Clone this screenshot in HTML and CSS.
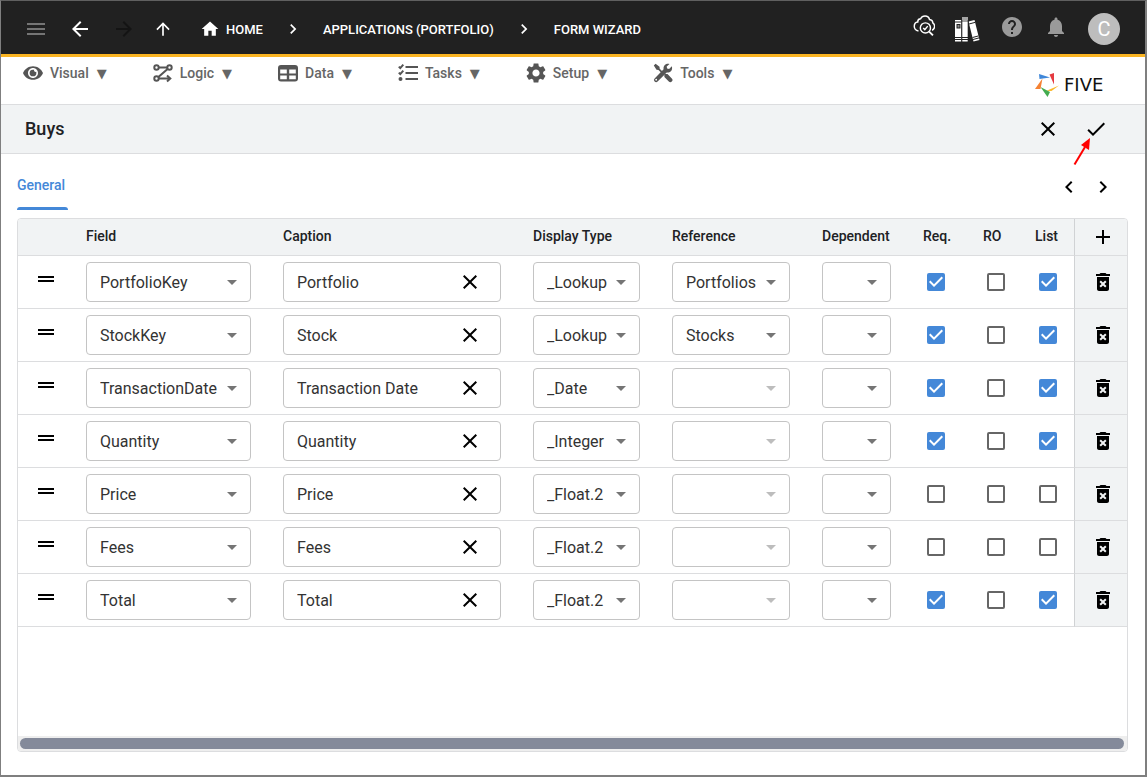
FILE: index.html
```html
<!DOCTYPE html>
<html lang="en">
<head>
    <meta charset="UTF-8">
    <meta name="viewport" content="width=device-width, initial-scale=1.0">
    <title>Form Wizard</title>
    <link rel="stylesheet" href="styles.css">
</head>
<body>

<!-- shared icons -->
<svg class="sprite" aria-hidden="true">
    <symbol id="i-drag" viewBox="0 0 24 24"><path d="M20 9H4v2h16V9zM4 15h16v-2H4v2z"/></symbol>
    <symbol id="i-close" viewBox="0 0 24 24"><path d="M19 6.41L17.59 5 12 10.59 6.41 5 5 6.41 10.59 12 5 17.59 6.41 19 12 13.41 17.59 19 19 17.59 13.41 12z"/></symbol>
    <symbol id="i-delete" viewBox="0 0 24 24"><path d="M6 19c0 1.1.9 2 2 2h8c1.1 0 2-.9 2-2V7H6v12zm2.46-7.12l1.41-1.41L12 12.59l2.12-2.12 1.41 1.41L13.41 14l2.12 2.12-1.41 1.41L12 15.41l-2.12 2.12-1.41-1.41L10.59 14l-2.13-2.12zM15.5 4l-1-1h-5l-1 1H5v2h14V4z"/></symbol>
    <symbol id="i-next" viewBox="0 0 24 24"><path d="M10 6L8.59 7.41 13.17 12l-4.58 4.59L10 18l6-6z"/></symbol>
    <symbol id="i-prev" viewBox="0 0 24 24"><path d="M15.41 7.41L14 6l-6 6 6 6 1.41-1.41L10.83 12z"/></symbol>
</svg>

<div class="window">
    <header class="topbar">
        <button class="icon-btn muted" aria-label="Menu"><svg class="icon" viewBox="0 0 24 24"><path d="M3 18h18v-2H3v2zm0-5h18v-2H3v2zm0-7v2h18V6H3z"/></svg></button>
        <button class="icon-btn" aria-label="Back"><svg class="icon" viewBox="0 0 24 24"><path d="M20 11H7.83l5.59-5.59L12 4l-8 8 8 8 1.41-1.41L7.83 13H20v-2z"/></svg></button>
        <button class="icon-btn off" aria-label="Forward" disabled><svg class="icon" viewBox="0 0 24 24"><path d="M12 4l-1.41 1.41L16.17 11H4v2h12.17l-5.58 5.59L12 20l8-8z"/></svg></button>
        <button class="icon-btn up" aria-label="Up"><svg class="icon small" viewBox="0 0 24 24"><path d="M4 12l1.41 1.41L11 7.83V20h2V7.83l5.58 5.59L20 12l-8-8-8 8z"/></svg></button>
        <nav class="crumbs">
            <a href="#"><svg class="icon small" viewBox="0 0 24 24"><path d="M10 20v-6h4v6h5v-8h3L12 3 2 12h3v8z"/></svg>HOME</a>
            <svg class="icon small"><use href="#i-next"/></svg>
            <a href="#">APPLICATIONS (PORTFOLIO)</a>
            <svg class="icon small"><use href="#i-next"/></svg>
            <a href="#">FORM WIZARD</a>
        </nav>
        <div class="tools">
            <button class="icon-btn" aria-label="Check status">
                <svg class="icon" viewBox="-2 1 25 25" fill="none" stroke="#fff">
                    <path stroke-width="1.5" d="M5.8 17.6C3.2 17.2 1.4 15.4 1.4 12.800c0-2.600 1.700-4.300 3.600-4.500C5 6.300 6.300 5 8 4.900 8.900 3 10.500 2 12.600 2c2.500 0 4.200 1.500 4.700 3.700 2.200.2 3.400 1.600 3.400 3.500 1.300.9 1.900 2 1.900 3.600 0 1.900-1 3.400-2.600 4.200"/>
                    <circle cx="13" cy="14.500" r="5.300" stroke-width="1.500"/>
                    <path stroke-width="1.500" d="M10.700 14.500l1.700 1.700 3-3.600"/>
                    <path stroke-width="2" d="M16.900 18.300l4 3.900"/>
                </svg>
            </button>
            <button class="icon-btn" aria-label="Library">
                <svg class="books" viewBox="0 -4 25 29">
                    <path fill="#fff" d="M0 3h6.500v21.500H0zM7 5h6v19.500H7z"/>
                    <path fill="#a5a5a5" d="M7 0h6v5H7z"/>
                    <path fill="#fff" d="M13.500 4.600l6-1.600 5 20-6 1.600z"/>
                    <path fill="none" stroke="#212121" stroke-width="1" d="M0 5h6.500M0 20.500h6.500M7 20.500h6M0 22.500h6.500M7 22.500h6M14 7l6-1.600M17.500 20.500l6-1.600M18 22.500l6-1.600M6.800 3v22M13.200 3v22"/>
                    <path fill="#212121" d="M1.500 7h4v4.500h-4z"/>
                    <path fill="#8a8a8a" d="M2.500 8h2v2.500h-2z"/>
                </svg>
            </button>
            <button class="icon-btn grey" aria-label="Help"><svg class="icon" viewBox="0 0 24 24"><path d="M12 2C6.480 2 2 6.480 2 12s4.480 10 10 10 10-4.480 10-10S17.520 2 12 2zm1 17h-2v-2h2v2zm2.070-7.750l-.9.920C13.450 12.900 13 13.500 13 15h-2v-.5c0-1.100.450-2.100 1.170-2.830l1.240-1.260c.370-.360.590-.860.590-1.410 0-1.100-.9-2-2-2s-2 .9-2 2H8c0-2.210 1.790-4 4-4s4 1.790 4 4c0 .880-.360 1.680-.930 2.250z"/></svg></button>
            <button class="icon-btn grey" aria-label="Notifications"><svg class="icon" viewBox="0 0 24 24"><path d="M12 22c1.100 0 2-.9 2-2h-4c0 1.100.890 2 2 2zm6-6v-5c0-3.070-1.640-5.640-4.500-6.320V4c0-.830-.670-1.500-1.500-1.500s-1.500.670-1.500 1.500v.680C7.630 5.360 6 7.920 6 11v5l-2 2v1h16v-1l-2-2z"/></svg></button>
        </div>
        <button class="avatar">C</button>
    </header>

    <div class="menubar">
        <nav class="menu">
            <button>
                <svg class="menu-icon" viewBox="1 1 22 22"><path d="M12 4.500C7 4.500 2.730 7.610 1 12c1.730 4.390 6 7.500 11 7.500s9.270-3.110 11-7.500c-1.730-4.390-6-7.500-11-7.500zM12 17.500c-3 0-5.500-2.500-5.500-5.500S9 6.500 12 6.500s5.500 2.500 5.500 5.500-2.500 5.500-5.500 5.500z"/><path d="M12 8.300a3.700 3.700 0 1 0 3.700 3.700c0-.5-.1-.9-.2-1.300a1.800 1.800 0 0 1-2.300-2.200c-.4-.1-.8-.2-1.200-.2z"/></svg>
                Visual <span class="caret">▼</span>
            </button>
            <button>
                <svg class="menu-icon line" viewBox="0 0 20 20"><circle cx="3.500" cy="4.500" r="2.200"/><circle cx="16.500" cy="4.500" r="2.200"/><circle cx="3.500" cy="15.500" r="2.200"/><path d="M5.700 4.500h8.600M14.600 5.900L5.400 14.100M5.700 15.500H17M14 12.500l3.300 3-3.300 3"/></svg>
                Logic <span class="caret">▼</span>
            </button>
            <button>
                <svg class="menu-icon" viewBox="0 0 20 20"><path fill-rule="evenodd" d="M3 2h14a3 3 0 0 1 3 3v10.500a3 3 0 0 1-3 3H3a3 3 0 0 1-3-3V5a3 3 0 0 1 3-3zM2.200 6.500v4h6.600v-4zM11.200 6.500v4h6.600v-4zM2.200 12.500v3.700h6.600v-3.700zM11.200 12.500v3.700h6.600v-3.700z"/></svg>
                Data <span class="caret">▼</span>
            </button>
            <button>
                <svg class="menu-icon line" viewBox="0 0 20 20"><path d="M7.500 4H20M7.500 10H20M7.500 16H20M.8 3.600l1.500 1.500 3-3.400M.8 9.600l1.500 1.500 3-3.400"/><circle cx="2.500" cy="16" r="1"/></svg>
                Tasks <span class="caret">▼</span>
            </button>
            <button>
                <svg class="menu-icon" viewBox="2 2 20 20"><path d="M19.140 12.940c.040-.3.060-.610.060-.940 0-.320-.020-.640-.070-.940l2.030-1.580c.180-.140.230-.410.120-.610l-1.920-3.320c-.120-.220-.370-.290-.590-.220l-2.390.960c-.5-.380-1.030-.7-1.620-.940l-.360-2.540c-.040-.240-.240-.410-.480-.410h-3.840c-.240 0-.430.170-.470.410l-.360 2.540c-.590.240-1.130.570-1.620.940l-2.390-.960c-.220-.080-.470 0-.590.220L2.740 8.870c-.120.210-.080.470.120.610l2.030 1.580c-.050.3-.090.630-.090.940s.020.640.070.940l-2.030 1.580c-.180.140-.230.410-.120.610l1.920 3.320c.120.220.370.290.590.220l2.390-.960c.5.380 1.030.7 1.620.940l.360 2.540c.050.240.240.410.480.410h3.840c.240 0 .440-.170.470-.410l.360-2.540c.590-.240 1.130-.560 1.620-.940l2.390.960c.220.080.470 0 .590-.220l1.920-3.320c.120-.220.070-.470-.120-.610l-2.010-1.580zM12 15.600c-1.980 0-3.600-1.620-3.600-3.600s1.620-3.600 3.600-3.600 3.600 1.620 3.600 3.600-1.620 3.600-3.600 3.600z"/></svg>
                Setup <span class="caret">▼</span>
            </button>
            <button>
                <svg class="menu-icon" viewBox="0 0 20 20"><path d="M2.600.8L6.500 3.700l.2 2 3.300 3.200-1.300 1.300-3.200-3.300-2-.2L.8 2.600zM11.800 10.900l2.700.2 4.300 4.300a2.100 2.100 0 0 1-3 3l-4.400-4.300-.1-2.500z"/><path d="M18.800 3.200l-2.700 2.700-2-.3-.4-2 2.800-2.700c-1.700-.5-3.500-.1-4.700 1.100-1.100 1.100-1.500 2.700-1.200 4.200L1.600 15.400a2.100 2.100 0 0 0 3 3l9.100-9c1.500.4 3.100-.1 4.200-1.200 1.300-1.300 1.500-3.300.9-5zM3.200 17.600a.9.9 0 1 1 0-1.800.9.9 0 0 1 0 1.800z"/></svg>
                Tools <span class="caret">▼</span>
            </button>
        </nav>
        <a class="logo" href="#">
            <svg viewBox="0 0 24 24"><path fill="#3f87d9" d="M4 1l11 3.500L4.500 6z"/><path fill="#e53a40" d="M14.500 1.500L19 0v11.500z"/><path fill="#fbb829" d="M24 12.500l-7.500 5.500-5-.2z"/><path fill="#43ab4f" d="M5.500 14l9.500 5-2.500 5z"/><path fill="#f58233" d="M7.500 5.500L5.500 16H0z"/></svg>
            <span class="logo-name">FIVE</span>
        </a>
    </div>

    <div class="form-header">
        <h1>Buys</h1>
        <button class="icon-btn" aria-label="Cancel"><svg class="icon"><use href="#i-close"/></svg></button>
        <button class="icon-btn save" aria-label="Save">
            <svg class="icon" viewBox="0 0 24 24"><path d="M9 16.170L4.830 12l-1.420 1.410L9 19 21 7l-1.410-1.410z"/></svg>
            <svg class="pointer" viewBox="0 0 18 28"><path stroke="#f00" stroke-width="2" d="M1.500 26.500L12 9"/><path fill="#f00" d="M17 0l-1 12-8-5z"/></svg>
        </button>
    </div>

    <main class="content">
        <div class="tabs">
            <button class="tab">General</button>
            <div class="pager">
                <button class="icon-btn" aria-label="Previous"><svg class="icon"><use href="#i-prev"/></svg></button>
                <button class="icon-btn" aria-label="Next"><svg class="icon"><use href="#i-next"/></svg></button>
            </div>
        </div>

        <div class="grid">
            <table>
                <colgroup>
                    <col class="c-drag"><col class="c-field"><col class="c-caption"><col class="c-type"><col class="c-ref">
                    <col class="c-dep"><col class="c-req"><col class="c-ro"><col class="c-list"><col class="c-action">
                </colgroup>
                <thead>
                    <tr>
                        <th></th>
                        <th>Field</th>
                        <th>Caption</th>
                        <th>Display Type</th>
                        <th>Reference</th>
                        <th>Dependent</th>
                        <th>Req.</th>
                        <th>RO</th>
                        <th>List</th>
                        <th class="action"><button class="icon-btn" aria-label="Add"><svg class="icon" viewBox="0 0 24 24"><path d="M19 13h-6v6h-2v-6H5v-2h6V5h2v6h6v2z"/></svg></button></th>
                    </tr>
                </thead>
                <tbody>
                    <tr>
                        <td class="drag"><svg class="icon"><use href="#i-drag"/></svg></td>
                        <td><select aria-label="Field"><option>PortfolioKey</option></select></td>
                        <td><div class="text-box"><input type="text" aria-label="Caption" value="Portfolio"><button class="icon-btn" aria-label="Clear"><svg class="icon"><use href="#i-close"/></svg></button></div></td>
                        <td><select aria-label="Display Type"><option>_Lookup</option></select></td>
                        <td><select aria-label="Reference"><option>Portfolios</option></select></td>
                        <td><select aria-label="Dependent"><option></option></select></td>
                        <td><input type="checkbox" aria-label="Required" checked></td>
                        <td><input type="checkbox" aria-label="Read only"></td>
                        <td><input type="checkbox" aria-label="List" checked></td>
                        <td class="action"><button class="icon-btn" aria-label="Delete"><svg class="icon"><use href="#i-delete"/></svg></button></td>
                    </tr>
                    <tr>
                        <td class="drag"><svg class="icon"><use href="#i-drag"/></svg></td>
                        <td><select aria-label="Field"><option>StockKey</option></select></td>
                        <td><div class="text-box"><input type="text" aria-label="Caption" value="Stock"><button class="icon-btn" aria-label="Clear"><svg class="icon"><use href="#i-close"/></svg></button></div></td>
                        <td><select aria-label="Display Type"><option>_Lookup</option></select></td>
                        <td><select aria-label="Reference"><option>Stocks</option></select></td>
                        <td><select aria-label="Dependent"><option></option></select></td>
                        <td><input type="checkbox" aria-label="Required" checked></td>
                        <td><input type="checkbox" aria-label="Read only"></td>
                        <td><input type="checkbox" aria-label="List" checked></td>
                        <td class="action"><button class="icon-btn" aria-label="Delete"><svg class="icon"><use href="#i-delete"/></svg></button></td>
                    </tr>
                    <tr>
                        <td class="drag"><svg class="icon"><use href="#i-drag"/></svg></td>
                        <td><select aria-label="Field"><option>TransactionDate</option></select></td>
                        <td><div class="text-box"><input type="text" aria-label="Caption" value="Transaction Date"><button class="icon-btn" aria-label="Clear"><svg class="icon"><use href="#i-close"/></svg></button></div></td>
                        <td><select aria-label="Display Type"><option>_Date</option></select></td>
                        <td><select aria-label="Reference" disabled><option></option></select></td>
                        <td><select aria-label="Dependent"><option></option></select></td>
                        <td><input type="checkbox" aria-label="Required" checked></td>
                        <td><input type="checkbox" aria-label="Read only"></td>
                        <td><input type="checkbox" aria-label="List" checked></td>
                        <td class="action"><button class="icon-btn" aria-label="Delete"><svg class="icon"><use href="#i-delete"/></svg></button></td>
                    </tr>
                    <tr>
                        <td class="drag"><svg class="icon"><use href="#i-drag"/></svg></td>
                        <td><select aria-label="Field"><option>Quantity</option></select></td>
                        <td><div class="text-box"><input type="text" aria-label="Caption" value="Quantity"><button class="icon-btn" aria-label="Clear"><svg class="icon"><use href="#i-close"/></svg></button></div></td>
                        <td><select aria-label="Display Type"><option>_Integer</option></select></td>
                        <td><select aria-label="Reference" disabled><option></option></select></td>
                        <td><select aria-label="Dependent"><option></option></select></td>
                        <td><input type="checkbox" aria-label="Required" checked></td>
                        <td><input type="checkbox" aria-label="Read only"></td>
                        <td><input type="checkbox" aria-label="List" checked></td>
                        <td class="action"><button class="icon-btn" aria-label="Delete"><svg class="icon"><use href="#i-delete"/></svg></button></td>
                    </tr>
                    <tr>
                        <td class="drag"><svg class="icon"><use href="#i-drag"/></svg></td>
                        <td><select aria-label="Field"><option>Price</option></select></td>
                        <td><div class="text-box"><input type="text" aria-label="Caption" value="Price"><button class="icon-btn" aria-label="Clear"><svg class="icon"><use href="#i-close"/></svg></button></div></td>
                        <td><select aria-label="Display Type"><option>_Float.2</option></select></td>
                        <td><select aria-label="Reference" disabled><option></option></select></td>
                        <td><select aria-label="Dependent"><option></option></select></td>
                        <td><input type="checkbox" aria-label="Required"></td>
                        <td><input type="checkbox" aria-label="Read only"></td>
                        <td><input type="checkbox" aria-label="List"></td>
                        <td class="action"><button class="icon-btn" aria-label="Delete"><svg class="icon"><use href="#i-delete"/></svg></button></td>
                    </tr>
                    <tr>
                        <td class="drag"><svg class="icon"><use href="#i-drag"/></svg></td>
                        <td><select aria-label="Field"><option>Fees</option></select></td>
                        <td><div class="text-box"><input type="text" aria-label="Caption" value="Fees"><button class="icon-btn" aria-label="Clear"><svg class="icon"><use href="#i-close"/></svg></button></div></td>
                        <td><select aria-label="Display Type"><option>_Float.2</option></select></td>
                        <td><select aria-label="Reference" disabled><option></option></select></td>
                        <td><select aria-label="Dependent"><option></option></select></td>
                        <td><input type="checkbox" aria-label="Required"></td>
                        <td><input type="checkbox" aria-label="Read only"></td>
                        <td><input type="checkbox" aria-label="List"></td>
                        <td class="action"><button class="icon-btn" aria-label="Delete"><svg class="icon"><use href="#i-delete"/></svg></button></td>
                    </tr>
                    <tr>
                        <td class="drag"><svg class="icon"><use href="#i-drag"/></svg></td>
                        <td><select aria-label="Field"><option>Total</option></select></td>
                        <td><div class="text-box"><input type="text" aria-label="Caption" value="Total"><button class="icon-btn" aria-label="Clear"><svg class="icon"><use href="#i-close"/></svg></button></div></td>
                        <td><select aria-label="Display Type"><option>_Float.2</option></select></td>
                        <td><select aria-label="Reference" disabled><option></option></select></td>
                        <td><select aria-label="Dependent"><option></option></select></td>
                        <td><input type="checkbox" aria-label="Required" checked></td>
                        <td><input type="checkbox" aria-label="Read only"></td>
                        <td><input type="checkbox" aria-label="List" checked></td>
                        <td class="action"><button class="icon-btn" aria-label="Delete"><svg class="icon"><use href="#i-delete"/></svg></button></td>
                    </tr>
                </tbody>
            </table>
            <div class="scrollbar"><div class="thumb"></div></div>
        </div>
    </main>
</div>

</body>
</html>
```
FILE: styles.css
```css
* {
    box-sizing: border-box;
}
body {
    margin: 0;
    font-family: Roboto, "DejaVu Sans", sans-serif;
    font-size: 14px;
    color: #202124;
    background-color: #fff;
}
button {
    padding: 0;
    border: none;
    background: none;
    font: inherit;
    color: inherit;
    cursor: pointer;
}
a {
    color: inherit;
    text-decoration: none;
}
.sprite {
    display: none;
}
.icon {
    display: block;
    width: 24px;
    height: 24px;
    flex: none;
    fill: currentColor;
}
.icon[fill="none"] {
    fill: none;
}
.icon.small {
    width: 20px;
    height: 20px;
}
.icon-btn {
    display: block;
    flex: none;
    color: #000;
}
.window {
    display: flex;
    flex-direction: column;
    min-height: 100vh;
    border: 1px solid #7f7f7f;
    border-top-color: #606060;
    border-right-width: 2px;
    border-bottom-width: 2px;
}

/* top bar */
.topbar {
    display: flex;
    align-items: center;
    height: 56px;
    padding: 3px 25px 0 23px;
    border-bottom: 3px solid #fbb523;
    background-color: #212121;
    color: #fff;
}
.topbar .icon-btn {
    margin-right: 20px;
    color: #fff;
}
.topbar .icon-btn.muted {
    color: #757575;
}
.topbar .icon-btn.off {
    margin-right: 17px;
    color: #141414;
}
.topbar .icon-btn.up {
    margin-right: 27px;
}
.topbar .icon-btn.grey {
    color: #9a9a9a;
}
.crumbs {
    display: flex;
    align-items: center;
    gap: 20px;
    font-size: 13px;
    font-weight: 500;
    white-space: nowrap;
}
.crumbs a {
    display: flex;
    align-items: center;
    gap: 6px;
}
.tools {
    display: flex;
    align-items: center;
    margin-left: auto;
    padding-bottom: 4px;
}
.books {
    display: block;
    width: 25px;
    height: 29px;
}
.avatar {
    width: 32px;
    height: 32px;
    border-radius: 50%;
    background-color: #bdbdbd;
    color: #fff;
    font-size: 20px;
    line-height: 32px;
}

/* menu */
.menubar {
    display: flex;
    justify-content: space-between;
    height: 47px;
    padding: 4px 21px 0 22px;
}
.menu {
    display: flex;
    gap: 46px;
    height: 24px;
}
.menu button {
    display: flex;
    align-items: center;
    gap: 7px;
    color: #666;
    font-weight: 500;
}
.menu-icon {
    width: 20px;
    height: 20px;
    fill: #555;
}
.menu-icon.line {
    fill: none;
    stroke: #555;
    stroke-width: 2;
}
.caret {
    margin-left: 1px;
    font-family: "DejaVu Sans", sans-serif;
    font-size: 13px;
}
.logo {
    display: flex;
    align-items: center;
    gap: 5px;
    height: 47px;
    color: #111;
}
.logo svg {
    width: 24px;
    height: 24px;
}
.logo-name {
    width: 60px;
    font-family: "DejaVu Sans", sans-serif;
    font-size: 18px;
}

/* form header */
.form-header {
    display: flex;
    align-items: center;
    gap: 24px;
    height: 50px;
    padding: 0 37px 0 24px;
    border-top: 1px solid #dcdddf;
    border-bottom: 1px solid #dcdddf;
    background-color: #f1f3f4;
}
.form-header h1 {
    flex: 1;
    margin: 0;
    padding-bottom: 2px;
    font-size: 18px;
    font-weight: 500;
}
.save {
    position: relative;
}
.pointer {
    position: absolute;
    left: -11px;
    top: 21px;
    width: 18px;
    height: 28px;
}

/* content */
.content {
    display: flex;
    flex: 1;
    flex-direction: column;
    padding: 0 17px 23px 16px;
}
.tabs {
    display: flex;
    justify-content: space-between;
    height: 56px;
    margin-bottom: 8px;
}
.tab {
    position: relative;
    padding: 6px 3px 0 0;
    color: #4488d8;
    font-weight: 500;
}
.tab::after {
    content: "";
    position: absolute;
    left: 0;
    right: 0;
    bottom: 0;
    height: 3px;
    border-radius: 3px 3px 0 0;
    background-color: #4488d8;
}
.pager {
    display: flex;
    align-items: center;
    gap: 10px;
    padding: 10px 13px 0 0;
}

/* table */
.grid {
    display: flex;
    flex: 1;
    flex-direction: column;
    justify-content: space-between;
    overflow: hidden;
    border: 1px solid #dcdddf;
    border-radius: 4px;
}
table {
    width: 100%;
    table-layout: fixed;
    border-spacing: 0;
}
.c-drag { width: 52px; }
.c-field { width: 197px; }
.c-type { width: 139px; }
.c-ref { width: 150px; }
.c-dep { width: 101px; }
.c-req { width: 60px; }
.c-ro { width: 52px; }
.c-list { width: 55px; }
.c-action { width: 53px; }
th {
    height: 37px;
    padding: 0 16px 2px;
    border-bottom: 1px solid #dcdddf;
    background-color: #f1f3f4;
    font-weight: 500;
    text-align: left;
    white-space: nowrap;
}
td {
    height: 53px;
    padding: 6px 16px;
    border-bottom: 1px solid #dcdddf;
}
td.drag {
    padding-top: 0;
    color: #000;
}
.action {
    padding-right: 0;
    border-left: 1px solid #d0d2d4;
    background-color: #f1f3f4;
}
th.action {
    padding-bottom: 0;
}
select, .text-box {
    display: block;
    width: 100%;
    height: 40px;
    border: 1px solid #c4c4c4;
    border-radius: 4px;
    background-color: #fff;
    color: #333;
    font-family: inherit;
    font-size: 16px;
}
select {
    appearance: none;
    padding: 0 28px 0 13px;
    background-image: url("data:image/svg+xml,%3Csvg xmlns='http://www.w3.org/2000/svg' viewBox='0 0 24 24'%3E%3Cpath fill='%23757575' d='M7 10l5 5 5-5z'/%3E%3C/svg%3E");
    background-repeat: no-repeat;
    background-position: right 6px center;
    background-size: 24px;
}
select:disabled {
    opacity: 1;
    background-image: url("data:image/svg+xml,%3Csvg xmlns='http://www.w3.org/2000/svg' viewBox='0 0 24 24'%3E%3Cpath fill='%23bdbdbd' d='M7 10l5 5 5-5z'/%3E%3C/svg%3E");
}
.text-box {
    display: flex;
    align-items: center;
    padding: 0 18px 0 13px;
}
.text-box input {
    flex: 1;
    min-width: 0;
    padding: 0;
    border: none;
    outline: none;
    background: none;
    color: inherit;
    font: inherit;
}
input[type="checkbox"] {
    appearance: none;
    display: block;
    width: 18px;
    height: 18px;
    margin: 0 4px;
    border: 2px solid #666;
    border-radius: 2px;
}
input[type="checkbox"]:checked {
    border: none;
    background: #4488d8 url("data:image/svg+xml,%3Csvg xmlns='http://www.w3.org/2000/svg' viewBox='3 3 18 18'%3E%3Cpath fill='%23fff' d='M10 17l-5-5 1.410-1.410L10 14.170l7.590-7.590L19 8z'/%3E%3C/svg%3E") center / 18px;
}
.scrollbar {
    height: 15px;
    padding: 2px 3px 2px 2px;
    background-color: #eee;
}
.thumb {
    height: 11px;
    border-radius: 6px;
    background-color: #848a9a;
}
```
